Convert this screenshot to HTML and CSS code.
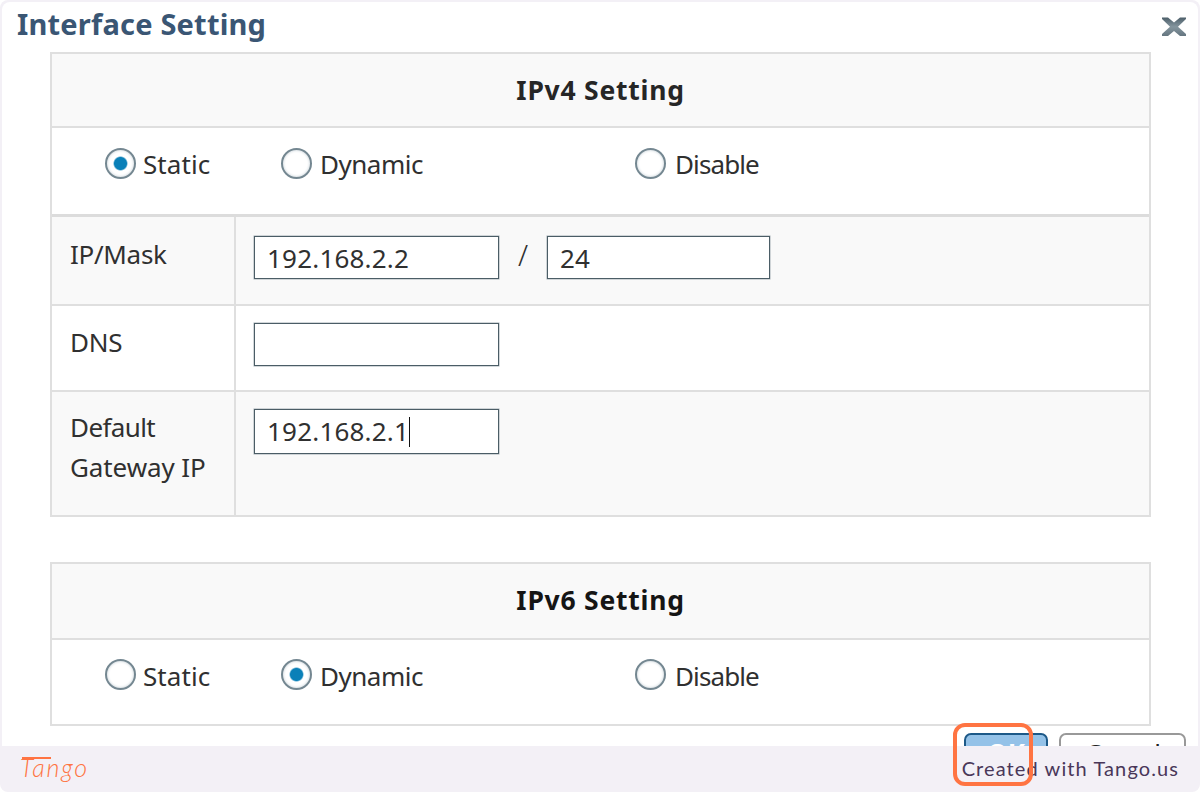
FILE: index.html
```html
<!DOCTYPE html>
<html lang="en">
<head>
<meta charset="utf-8">
<title>Interface Setting</title>
<link rel="stylesheet" href="styles.css">
</head>
<body>
<div class="frame">
  <main class="dialog">
    <header class="titlebar">
      <h1 class="title">Interface Setting</h1>
      <svg class="close" width="24" height="20" viewBox="0 0 24 20"><defs><linearGradient id="x" x1="0" y1="0" x2="0" y2="1"><stop offset="0" stop-color="#4d5f6a"/><stop offset=".5" stop-color="#84959e"/><stop offset="1" stop-color="#657680"/></linearGradient></defs><path d="M0 .5H6L12 5.500 18 .5H24V2L16 9.700 24 17V19H18L12 14 6 19H0V17L8 9.700 0 2Z" fill="url(#x)"/></svg>
    </header>
    <section class="panel">
      <h2 class="panel-head">IPv4 Setting</h2>
      <div class="radios radios-v4">
        <label class="option static"><span class="radio on"></span><span>Static</span></label>
        <label class="option"><span class="radio"></span><span>Dynamic</span></label>
        <label class="option disable"><span class="radio"></span><span>Disable</span></label>
      </div>
      <div class="row row-ip">
        <div class="name">IP/Mask</div>
        <div class="value"><div class="field">192.168.2.2</div><span class="slash">/</span><div class="field mask">24</div></div>
      </div>
      <div class="row row-dns">
        <div class="name">DNS</div>
        <div class="value"><div class="field"></div></div>
      </div>
      <div class="row row-gw">
        <div class="name"><span class="tight">Default</span><br>Gateway IP</div>
        <div class="value"><div class="field tall">192.168.2.1<span class="caret"></span></div></div>
      </div>
    </section>
    <section class="panel panel-v6">
      <h2 class="panel-head head-v6">IPv6 Setting</h2>
      <div class="radios radios-v6">
        <label class="option static"><span class="radio"></span><span>Static</span></label>
        <label class="option"><span class="radio on"></span><span>Dynamic</span></label>
        <label class="option disable"><span class="radio"></span><span>Disable</span></label>
      </div>
    </section>
    <div class="actions">
      <div class="btn ok">OK</div>
      <div class="btn cancel">Cancel</div>
    </div>
  </main>
  <footer class="footer">
    <span class="brand">Tango</span>
    <span class="credit">Created with Tango.us</span>
  </footer>
  <div class="highlight"></div>
</div>
</body>
</html>
```

FILE: styles.css
```css
* { box-sizing: border-box; }
body { margin: 0; background: #fff; font: 26px/40px "Noto Sans", sans-serif; color: #303030; }
.frame { position: relative; width: 1200px; height: 792px; padding: 2px 2px 0; background: #f3f0f6; border-radius: 8px; overflow: hidden; }
.dialog { height: 744px; background: #fff; border-radius: 8px 8px 0 0; overflow: hidden; }
.titlebar { display: flex; justify-content: space-between; height: 50px; padding: 2px 12px 0 15px; }
.title { margin: 0; font-size: 29px; line-height: 40px; font-weight: 700; color: #3a5674; letter-spacing: .2px; }
.close { margin-top: 13px; }
.panel { width: 1101px; margin-left: 48px; border: 2px solid #dfdfdf; background: #fff; }
.panel-v6 { margin-top: 45px; }
.panel-head { margin: 0; height: 74px; padding-top: 16px; border-bottom: 2px solid #dfdfdf; background: #f9f9f9; text-align: center; font-size: 26.500px; line-height: 40px; font-weight: 700; letter-spacing: .75px; color: #262626; }
.head-v6 { height: 76px; color: #151515; }
.radios { display: grid; grid-template-columns: 176px 354px auto; padding-left: 53px; align-items: start; }
.radios-v4 { height: 89px; padding-top: 16px; border-bottom: 3px solid #dcdcdc; }
.radios-v6 { height: 84px; padding-top: 16px; }
.option { display: flex; gap: 8px; letter-spacing: -.5px; }
.static { gap: 7px; letter-spacing: .1px; }
.disable { gap: 9px; letter-spacing: -.9px; }
.radio { width: 31px; height: 31px; margin-top: 4px; border: 2.5px solid #748791; border-radius: 50%; background: #fff; box-shadow: inset 0 0 3px #b9c6ce; }
.radios-v6 .radio { margin-top: 3px; }
.radio.on { background: radial-gradient(circle, #0a80b8 0 6px, #fff 7.5px); }
.row { display: grid; grid-template-columns: 184px 1fr; background: #f9f9f9; }
.row-ip { height: 89px; border-bottom: 2px solid #dfdfdf; }
.row-dns { height: 86px; border-bottom: 2px solid #dfdfdf; background: #fff; }
.row-gw { height: 123px; }
.name { padding: 17px 0 0 18px; border-right: 2px solid #dfdfdf; letter-spacing: -.3px; }
.tight { letter-spacing: -.6px; }
.row-dns .name { padding-top: 16px; }
.row-gw .name { padding-top: 16px; line-height: 39.5px; letter-spacing: -.1px; }
.row-gw .tight { letter-spacing: -.6px; }
.value { display: flex; align-items: flex-start; padding: 19px 0 0 18px; }
.row-dns .value { padding-top: 17px; }
.row-gw .value { padding-top: 17px; }
.field { display: flex; width: 245px; height: 43px; padding: 1px 0 0 12px; border: 1px solid #4b5d66; box-shadow: 0 0 0 .5px #a5b0b6; background: #fff; letter-spacing: .2px; }
.tall { height: 45px; }
.mask { width: 223px; }
.slash { width: 48px; text-align: center; font-size: 29px; font-weight: 300; line-height: 38px; }
.caret { width: 1px; height: 30px; margin-top: 6px; background: #111; }
.actions { display: flex; justify-content: flex-end; gap: 11px; padding: 7px 12px 0 0; }
.btn { height: 44px; border: 2px solid #999; border-radius: 7px; text-align: center; line-height: 37px; font-size: 26px; }
.ok { width: 84px; border-color: #1d5988; background: #94c2e8; color: #fff; font-weight: 700; }
.cancel { width: 127px; background: #fff; color: #222; letter-spacing: -1px; }
.footer { display: flex; justify-content: space-between; height: 46px; padding: 0 19px 0 18px; }
.brand { position: relative; font: italic 300 25px/42px Lato, sans-serif; color: #ff7442; letter-spacing: 1.8px; }
.brand::before { content: ""; position: absolute; left: 2px; top: 11px; width: 29px; height: 2px; background: #ff7442; }
.credit { font: 400 20px/44px Lato, sans-serif; color: #493759; letter-spacing: 1.1px; }
.highlight { position: absolute; left: 953px; top: 723px; width: 80px; height: 63px; border: 4px solid #ff7442; border-radius: 12px; }
```
